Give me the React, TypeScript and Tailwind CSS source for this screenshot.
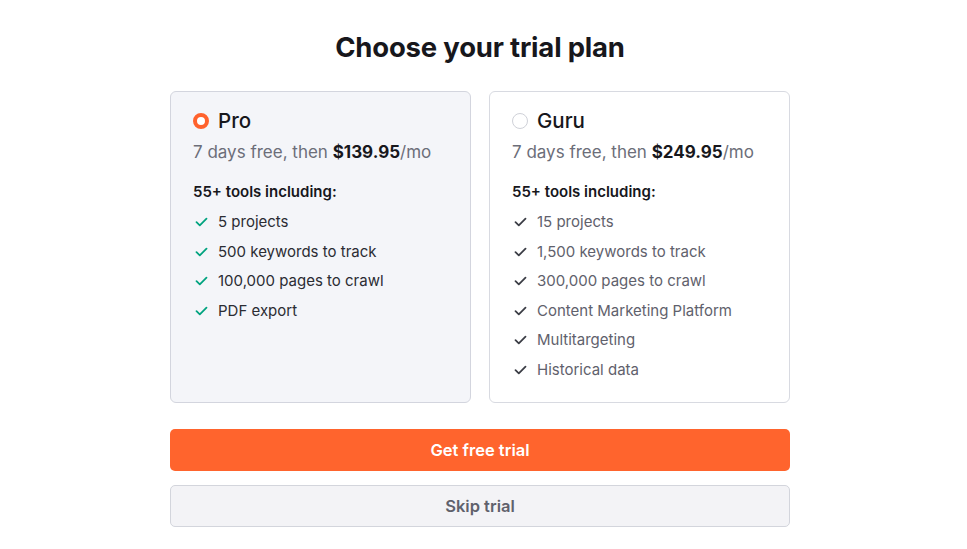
const plans = [
  {
    name: "Pro",
    price: "$139.95",
    selected: true,
    features: ["5 projects", "500 keywords to track", "100,000 pages to crawl", "PDF export"],
  },
  {
    name: "Guru",
    price: "$249.95",
    selected: false,
    features: [
      "15 projects",
      "1,500 keywords to track",
      "300,000 pages to crawl",
      "Content Marketing Platform",
      "Multitargeting",
      "Historical data",
    ],
  },
];

function Check({ color }: { color: string }) {
  return (
    <svg width="13" height="10" viewBox="0 0 13 10" fill="none" className="shrink-0">
      <path d="M1.5 5.2L4.8 8.3L11.5 1.7" stroke={color} strokeWidth="1.8" strokeLinecap="round" strokeLinejoin="round" />
    </svg>
  );
}

export default function App() {
  return (
    <div className="min-h-[549px] w-full bg-white font-['Inter',sans-serif] text-[#1e1e24]">
      <div className="ml-[170px] w-[620px] pt-[31px]">
        <h1 className="text-center text-[27.5px] font-bold leading-[32px] tracking-[-0.2px] text-[#17171c]">
          Choose your trial plan
        </h1>

        <div className="mt-[28px] grid grid-cols-2 gap-[18px]">
          {plans.map((p) => (
            <div
              key={p.name}
              className={
                p.selected
                  ? "rounded-[6px] border border-[#d3d5de] bg-[#f4f5f9] px-[22px] pb-[22px] pt-[15px]"
                  : "rounded-[6px] border border-[#d8dae1] bg-white px-[22px] pb-[22px] pt-[15px]"
              }
            >
              <div className="flex h-[28px] items-center gap-[9px]">
                {p.selected ? (
                  <span className="h-[16px] w-[16px] rounded-full border-[4px] border-[#ff622d] bg-white" />
                ) : (
                  <span className="h-[16px] w-[16px] rounded-full border border-[#cfd1d8] bg-white" />
                )}
                <span className="text-[20.5px] font-medium leading-[28px] text-[#17171c]">{p.name}</span>
              </div>
              <p className="mt-[5px] text-[17px] leading-[24px] text-[#6c6e79]">
                7 days free, then <span className="font-bold text-[#17171c]">{p.price}</span>/mo
              </p>
              <p className="mt-[18px] text-[15px] font-semibold leading-[20px] text-[#17171c]">
                55+ tools including:
              </p>
              <ul className="mt-[10px] flex flex-col gap-[9.6px]">
                {p.features.map((f) => (
                  <li key={f} className="flex items-center gap-[10px] pl-[2px] text-[15px] leading-[20px]">
                    <Check color={p.selected ? "#00a37f" : "#3b3d45"} />
                    <span className={p.selected ? "text-[#2b2c33]" : "text-[#5f616c]"}>{f}</span>
                  </li>
                ))}
              </ul>
            </div>
          ))}
        </div>

        <button className="mt-[26px] flex h-[42px] w-full items-center justify-center rounded-[5px] bg-[#ff642d] text-[16.5px] font-semibold text-white">
          Get free trial
        </button>
        <button className="mt-[14px] flex h-[42px] w-full items-center justify-center rounded-[5px] border border-[#d3d5dc] bg-[#f3f3f6] text-[16.5px] font-semibold text-[#5f616c]">
          Skip trial
        </button>
      </div>
    </div>
  );
}
